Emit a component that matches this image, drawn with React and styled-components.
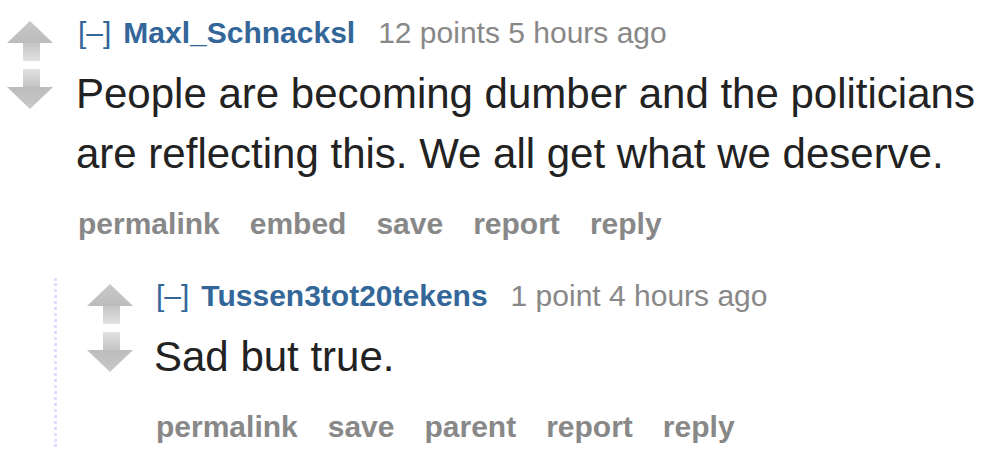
import React from 'react';
import styled, { createGlobalStyle } from 'styled-components';

const GlobalStyle = createGlobalStyle`
  html, body {
    margin: 0;
    padding: 0;
    background: #fff;
  }
  body {
    font-family: "Liberation Sans", Arial, sans-serif;
  }
`;

const Page = styled.div`
  width: 1004px;
  height: 454px;
  overflow: hidden;
  padding-top: 15px;
  box-sizing: border-box;
`;

const Comment = styled.div`
  display: flex;
  align-items: flex-start;
  padding-left: ${(p) => p.$indent || 7}px;
`;

const Votes = styled.div`
  display: flex;
  flex-direction: column;
  align-items: center;
  gap: 6px;
  width: 46px;
  padding-top: 5px;
  flex-shrink: 0;
`;

const Entry = styled.div`
  margin-left: ${(p) => p.$offset || 23}px;
  flex: 1;
`;

const Tagline = styled.div`
  display: flex;
  align-items: baseline;
  font-size: 30px;
  line-height: 36px;
  color: #888;
  white-space: nowrap;
`;

const Expand = styled.span`
  color: #369;
  margin-right: 12px;
`;

const Author = styled.span`
  color: #369;
  font-weight: bold;
  margin-right: 23px;
`;

const Body = styled.div`
  margin: 13px 0 0 ${(p) => p.$shift || 0}px;
  font-size: 42px;
  line-height: 60px;
  color: #222;
`;

const Buttons = styled.ul`
  display: flex;
  gap: 30px;
  list-style: none;
  margin: 22px 0 0;
  padding: 0;
  font-size: 30px;
  line-height: 36px;
  font-weight: bold;
  color: #888;
`;

const Child = styled.div`
  margin-top: 38px;
  margin-left: 54px;
  border-left: 3px dotted #ddf;
  padding-bottom: 2px;
`;

const ChildInner = styled.div`
  margin-top: -2px;
`;

const Arrow = ({ down }) => (
  <svg width="46" height="42" viewBox="0 0 46 42" style={down ? { transform: 'scaleY(-1)' } : undefined}>
    <defs>
      <linearGradient id="stem" x1="0" y1="0" x2="0" y2="1">
        <stop offset="0" stopColor="#c2c2c2" />
        <stop offset="1" stopColor="#e2e2e2" />
      </linearGradient>
      <linearGradient id="head" x1="0" y1="0" x2="0" y2="1">
        <stop offset="0" stopColor="#c8c8c8" />
        <stop offset="1" stopColor="#bcbcbc" />
      </linearGradient>
    </defs>
    <rect x="16" y="22" width="17" height="19" fill="url(#stem)" />
    <polygon points="23,1 46,23 0,23" fill="url(#head)" />
  </svg>
);

const CommentBlock = ({ indent, offset, shift, author, score, time, text, buttons }) => (
  <Comment $indent={indent}>
    <Votes>
      <Arrow />
      <Arrow down />
    </Votes>
    <Entry $offset={offset}>
      <Tagline>
        <Expand>[–]</Expand>
        <Author>{author}</Author>
        <span>{score} {time}</span>
      </Tagline>
      <Body $shift={shift}>{text}</Body>
      <Buttons>
        {buttons.map((b) => (
          <li key={b}>{b}</li>
        ))}
      </Buttons>
    </Entry>
  </Comment>
);

export default function App() {
  return (
    <>
      <GlobalStyle />
      <Page>
        <CommentBlock
          indent={7}
          offset={25}
          shift={-2}
          author="Maxl_Schnacksl"
          score="12 points"
          time="5 hours ago"
          text="People are becoming dumber and the politicians are reflecting this. We all get what we deserve."
          buttons={['permalink', 'embed', 'save', 'report', 'reply']}
        />
        <Child>
          <ChildInner>
            <CommentBlock
              indent={30}
              offset={23}
              shift={-2}
              author="Tussen3tot20tekens"
              score="1 point"
              time="4 hours ago"
              text="Sad but true."
              buttons={['permalink', 'save', 'parent', 'report', 'reply']}
            />
          </ChildInner>
        </Child>
      </Page>
    </>
  );
}
